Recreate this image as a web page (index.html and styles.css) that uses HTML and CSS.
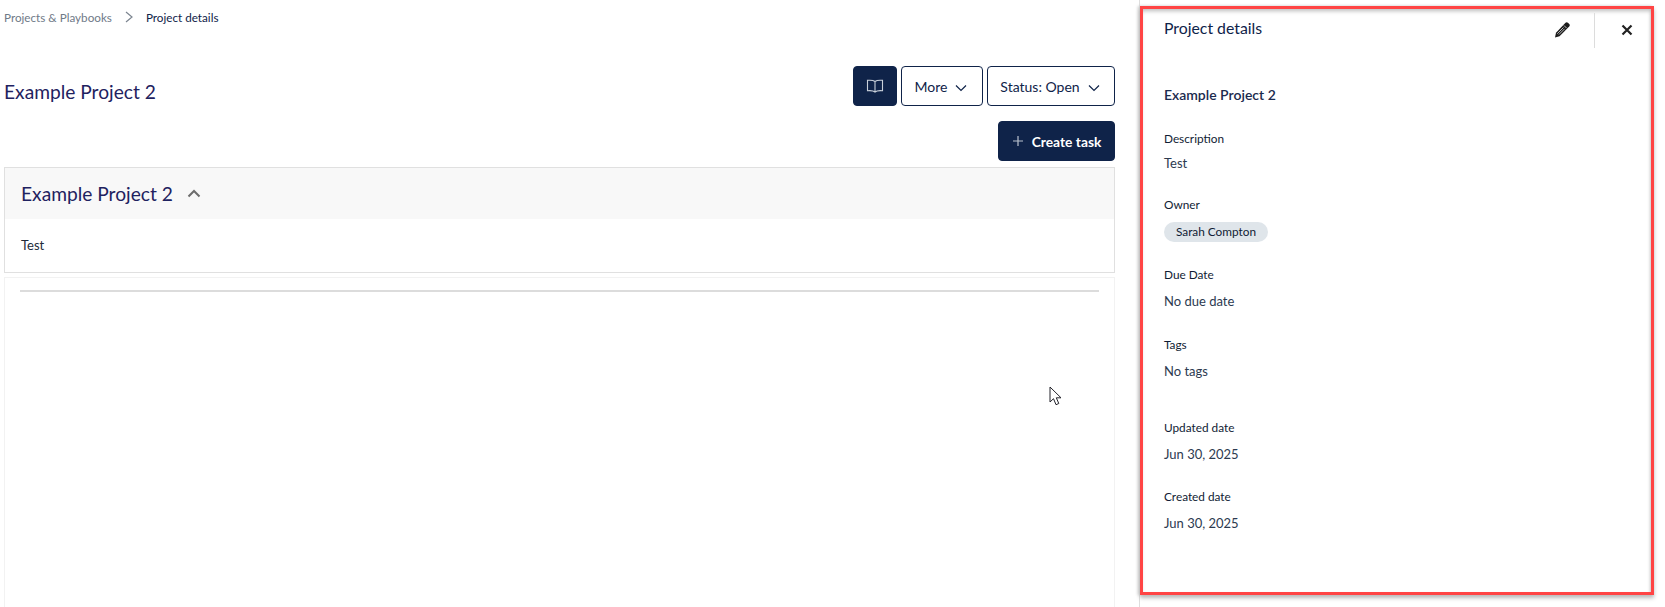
FILE: index.html
```html
<!DOCTYPE html>
<html>
<head>
    <meta charset="utf-8" />
    <title>Project details</title>
    <link rel="stylesheet" href="styles.css">
</head>
<body>
    <div class="page">
        <div class="main">
            <div class="breadcrumb">
                <span class="crumb_link">Projects &amp; Playbooks</span>
                <svg class="crumb_sep" width="10" height="12" viewBox="0 0 10 12"><path d="M2 1l6 5-6 5" fill="none" stroke="#7c8590" stroke-width="1.2"/></svg>
                <span class="crumb_current">Project details</span>
            </div>
            <div class="title_row">
                <h1>Example Project 2</h1>
                <div class="actions">
                    <button class="btn btn_dark btn_icon">
                        <svg width="18" height="16" viewBox="0 0 18 16"><path d="M9 3.500C7.500 2.300 4.500 2 1.500 2.300v10.400c3-.3 6 0 7.500 1.300 1.500-1.300 4.500-1.600 7.500-1.300V2.300C13.500 2 10.500 2.300 9 3.500zM9 3.500V14" fill="none" stroke="#c9d0da" stroke-width="1.100"/></svg>
                    </button>
                    <button class="btn btn_more">More
                        <svg class="chev" width="12" height="8" viewBox="0 0 12 8"><path d="M1 1.500l5 5 5-5" fill="none" stroke="#0f2349" stroke-width="1.200"/></svg>
                    </button>
                    <button class="btn btn_status">Status: Open
                        <svg class="chev" width="12" height="8" viewBox="0 0 12 8"><path d="M1 1.500l5 5 5-5" fill="none" stroke="#0f2349" stroke-width="1.200"/></svg>
                    </button>
                </div>
            </div>
            <div class="create_row">
                <button class="btn btn_dark btn_create">
                    <svg width="12" height="12" viewBox="0 0 12 12"><path d="M6 1v10M1 6h10" stroke="#b9c1cd" stroke-width="1.200"/></svg>
                    Create task
                </button>
            </div>
            <div class="card">
                <div class="card_head">
                    <h2>Example Project 2</h2>
                    <svg width="14" height="9" viewBox="0 0 14 9"><path d="M1.500 7.500L7 2l5.500 5.500" fill="none" stroke="#6d6d6d" stroke-width="2"/></svg>
                </div>
                <div class="card_body">Test</div>
            </div>
            <div class="tasks">
                <hr />
            </div>
        </div>

        <div class="panel">
            <div class="panel_head">
                <div class="panel_title">Project details</div>
                <div class="panel_edit">
                    <svg width="16" height="16" viewBox="0 0 16 16"><path d="M11.500.8a1.700 1.700 0 0 1 2.400 0l1.300 1.300a1.700 1.700 0 0 1 0 2.400L5.500 14.200 1 15.500l1-4.800z" fill="#1c1c1c"/><path d="M3.300 11.700L9.500 5.500M4.900 12.500L10.600 6.800" stroke="#e4e4e4" stroke-width=".8"/><path d="M10 3.500l2.500 2.500" stroke="#fff" stroke-width=".7"/></svg>
                </div>
                <div class="panel_close">
                    <svg width="12" height="12" viewBox="0 0 12 12"><path d="M1.500 1.500l9 9M10.500 1.500l-9 9" stroke="#222" stroke-width="2.200"/></svg>
                </div>
            </div>
            <div class="panel_name">Example Project 2</div>
            <div class="field field_desc">
                <div class="label">Description</div>
                <div class="value value_near">Test</div>
            </div>
            <div class="field field_owner">
                <div class="label">Owner</div>
                <div class="chip">Sarah Compton</div>
            </div>
            <div class="field field_due">
                <div class="label">Due Date</div>
                <div class="value">No due date</div>
            </div>
            <div class="field field_tags">
                <div class="label">Tags</div>
                <div class="value">No tags</div>
            </div>
            <div class="field field_updated">
                <div class="label">Updated date</div>
                <div class="value">Jun 30, 2025</div>
            </div>
            <div class="field field_created">
                <div class="label">Created date</div>
                <div class="value">Jun 30, 2025</div>
            </div>
        </div>
    </div>

    <svg class="cursor" width="14" height="21" viewBox="0 0 14 21"><path d="M1 1v15l3.500-3.300 2.500 6 2.800-1.200-2.500-5.700H12z" fill="#fff" stroke="#23232b" stroke-width="1"/></svg>
</body>
</html>
```

FILE: styles.css
```css
* {
    font-family: Lato, "Open Sans", sans-serif;
    box-sizing: border-box;
}

body {
    margin: 0;
    background: #fff;
    color: #1b2a44;
}

.page {
    display: flex;
    height: 607px;
    overflow: hidden;
}

.main {
    width: 1140px;
    flex: none;
    padding: 0 24px 0 4px;
    border-right: 1px solid #dedede;
}

.breadcrumb {
    display: flex;
    align-items: center;
    height: 34px;
    font-size: 11.7px;
}

.crumb_link {
    color: #6f7a88;
}

.crumb_sep {
    margin: 0 12px;
}

.crumb_current {
    color: #0f2349;
}

.title_row {
    display: flex;
    justify-content: space-between;
    align-items: center;
    margin-top: 32px;
    height: 40px;
}

h1 {
    margin: 10px 0 0 0;
    font-size: 19.2px;
    font-weight: 400;
    color: #1f2260;
}

.actions {
    display: flex;
    gap: 4px;
}

.btn {
    display: flex;
    align-items: center;
    justify-content: center;
    height: 40px;
    border-radius: 4px;
    border: 1px solid #0f2349;
    background: #fff;
    color: #0f2349;
    font-size: 14px;
    padding: 0;
}

.btn_dark {
    background: #0f2349;
    color: #fff;
}

.btn_icon {
    width: 44px;
}

.btn_more {
    width: 82px;
    padding-right: 2px;
}

.btn_status {
    width: 128px;
    padding-right: 2px;
}

.chev {
    margin: 3px 0 0 8px;
}

.create_row {
    display: flex;
    justify-content: flex-end;
    margin-top: 15px;
}

.btn_create {
    width: 117px;
    gap: 8px;
    font-size: 13.8px;
    font-weight: 700;
}

.card {
    margin-top: 6px;
    height: 106px;
    border: 1px solid #e0e0e0;
}

.card_head {
    display: flex;
    align-items: center;
    gap: 14px;
    height: 51px;
    padding-left: 16px;
    background: #f8f8f8;
}

h2 {
    margin: 0;
    font-size: 19.2px;
    font-weight: 400;
    color: #1f2260;
}

.card_body {
    padding: 18px 16px;
    font-size: 13px;
    color: #222b3a;
}

.tasks {
    margin-top: 4px;
    height: 340px;
    padding: 12px 15px;
    border: 1px solid #f2f2f2;
}

hr {
    margin: 0;
    height: 2px;
    border: none;
    background: #dcdcdc;
}

.panel {
    width: 514px;
    height: 589px;
    margin-top: 6px;
    padding-left: 21px;
    border: 3px solid #ff4444;
    background: #fff;
    box-shadow: inset 0 4px 4px -2px #bbb, inset -3px 0 3px -2px #ccc, 0 3px 4px #bbb, -2px 0 3px #ccc;
}

.panel_head {
    display: flex;
    height: 35px;
    margin-top: 4px;
}

.panel_title {
    flex: 1;
    padding-top: 5px;
    font-size: 15.8px;
    color: #0f2349;
}

.panel_edit {
    width: 16px;
    margin-right: 24px;
    padding-top: 9px;
}

.panel_close {
    width: 57px;
    padding: 7px 0 0 26px;
    border-left: 1px solid #dcdcdc;
}

.panel_name {
    margin-top: 38px;
    line-height: 18px;
    font-size: 14px;
    font-weight: 600;
    color: #1b2a4e;
}

.label {
    line-height: 16px;
    font-size: 11.8px;
    color: #101c34;
}

.value {
    line-height: 16px;
    margin-top: 10px;
    font-size: 13px;
    color: #2c3a50;
}

.value_near {
    margin-top: 8px;
}

.field_desc {
    margin-top: 27px;
}

.field_owner {
    margin-top: 26px;
}

.chip {
    width: 104px;
    height: 20px;
    margin-top: 9px;
    line-height: 20px;
    text-align: center;
    font-size: 11.8px;
    border-radius: 10px;
    background: #dfe5ea;
    color: #101c34;
}

.field_due {
    margin-top: 25px;
}

.field_tags {
    margin-top: 28px;
}

.field_updated {
    margin-top: 41px;
}

.field_created {
    margin-top: 27px;
}

.cursor {
    position: absolute;
    left: 1049px;
    top: 386px;
}
```
